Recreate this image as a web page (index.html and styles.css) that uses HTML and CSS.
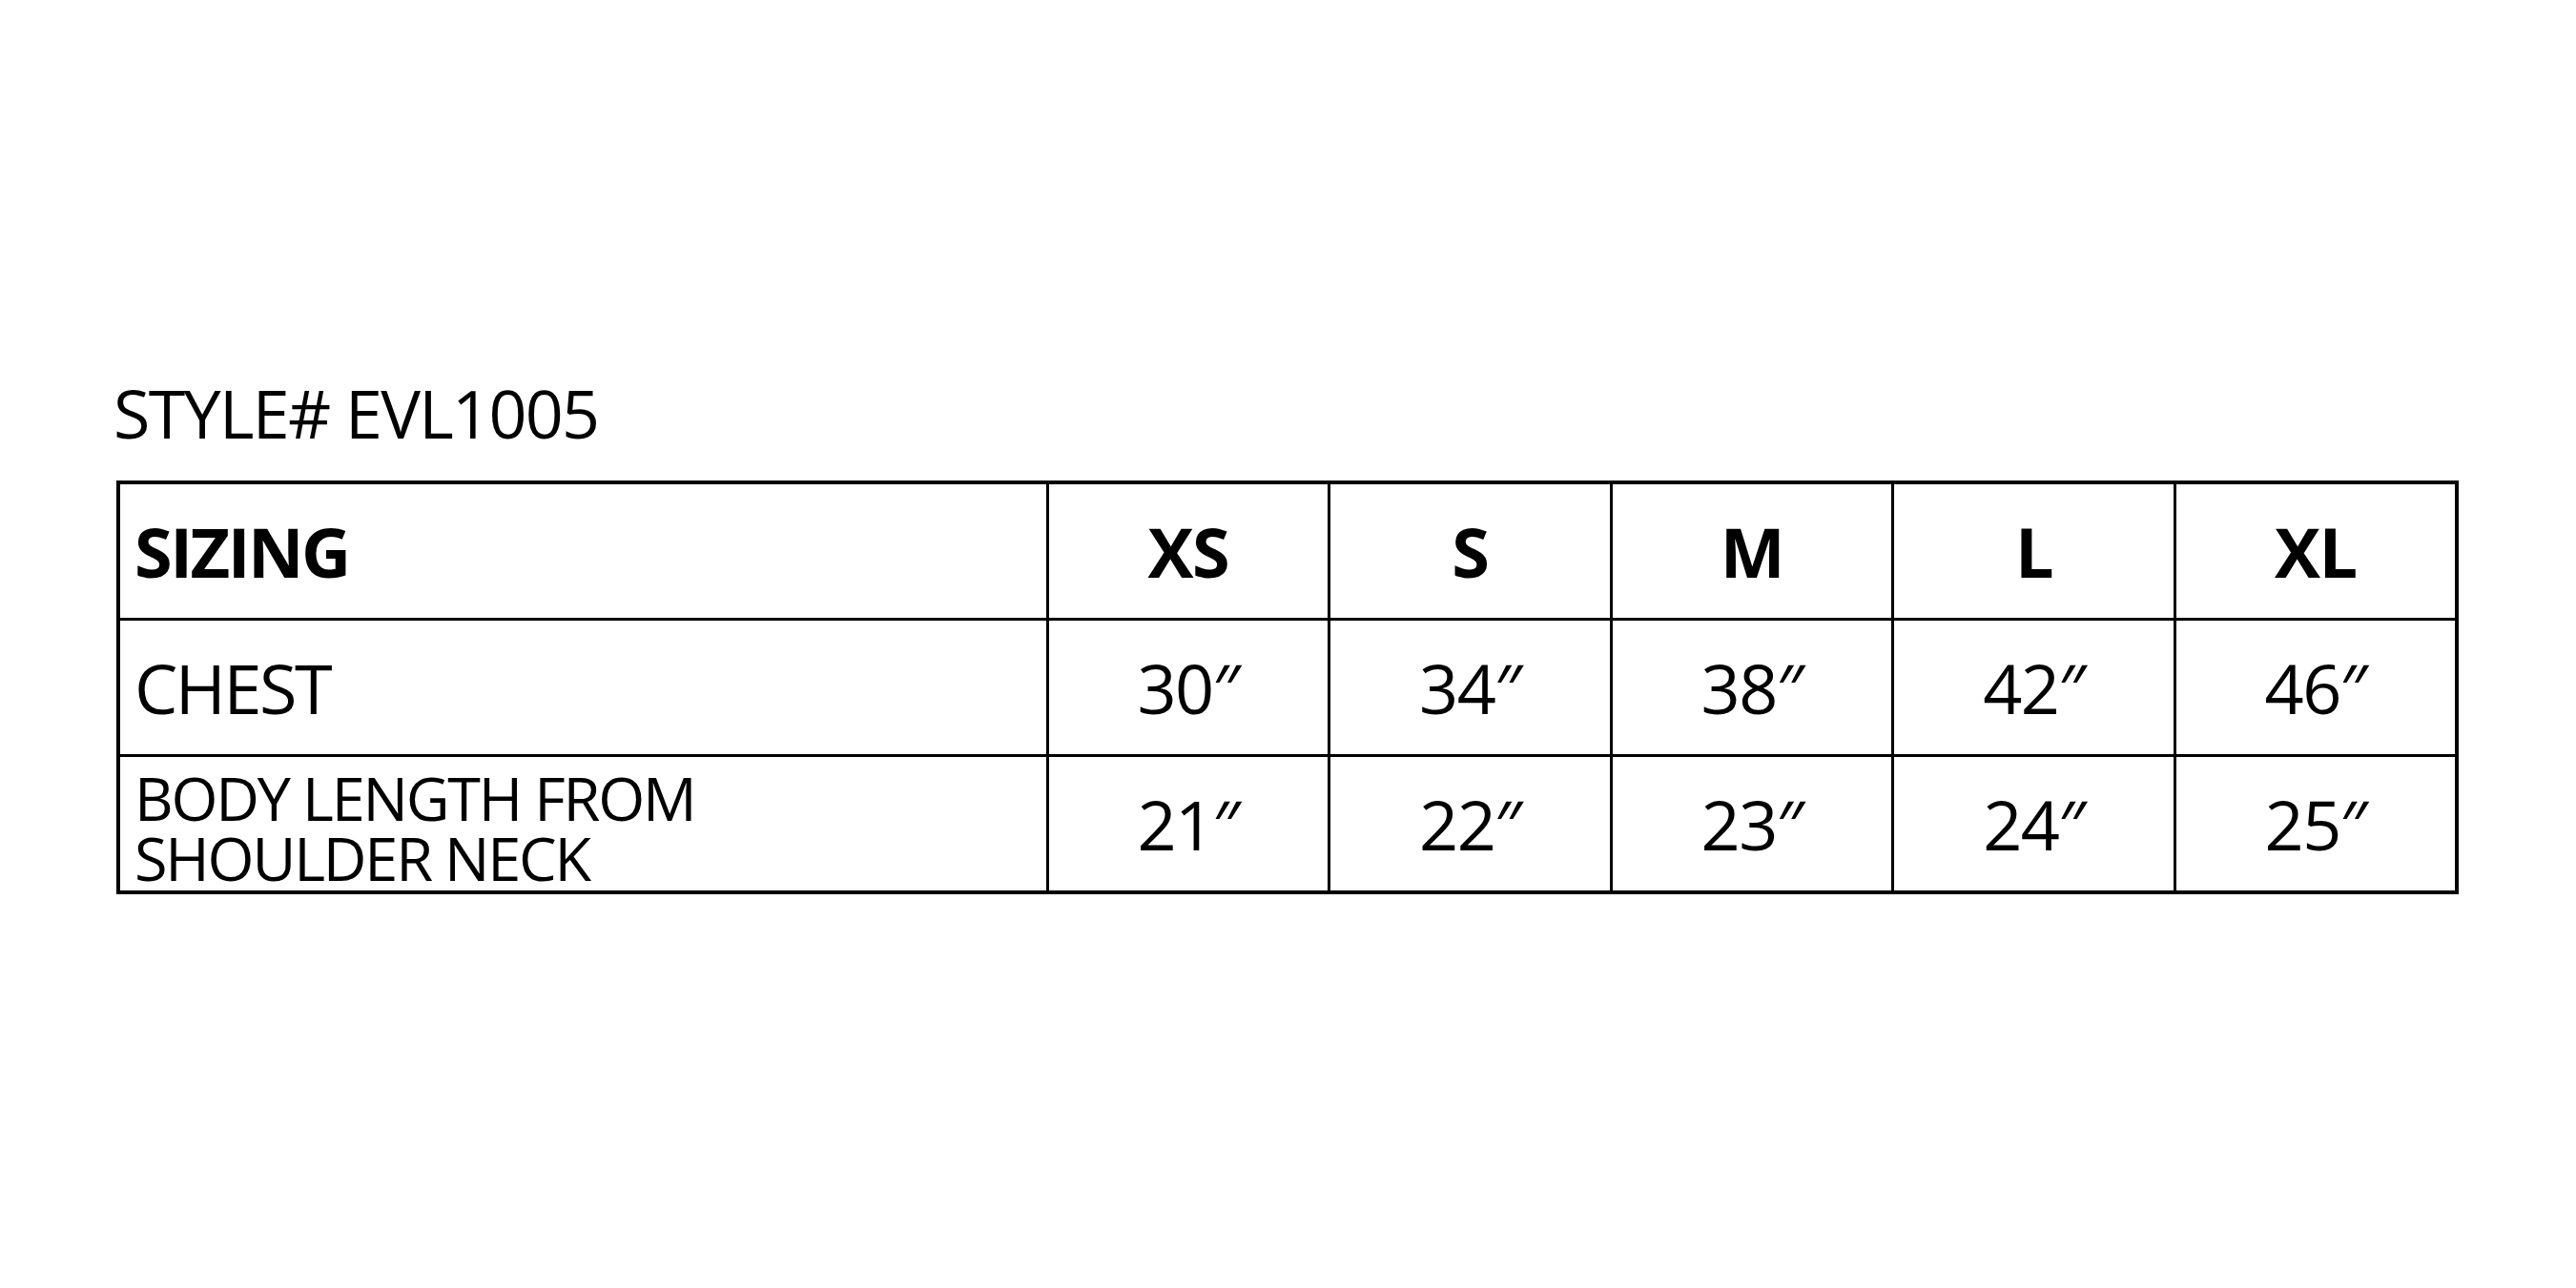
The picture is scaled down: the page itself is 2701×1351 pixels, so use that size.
FILE: index.html
```html
<!DOCTYPE html>
<html lang="en">
<head>
<meta charset="utf-8">
<title>Size chart EVL1005</title>
<link rel="stylesheet" href="styles.css">
</head>
<body>
<main class="sheet">
  <h1 class="style-title">STYLE# EVL1005</h1>
  <table class="size-table">
    <colgroup>
      <col class="col-label">
      <col class="col-size"><col class="col-size"><col class="col-size"><col class="col-size"><col class="col-size">
    </colgroup>
    <tr class="row-head">
      <th class="label">SIZING</th>
      <th>XS</th><th>S</th><th>M</th><th>L</th><th>XL</th>
    </tr>
    <tr>
      <td class="label">CHEST</td>
      <td>30″</td><td>34″</td><td>38″</td><td>42″</td><td>46″</td>
    </tr>
    <tr>
      <td class="label small"><span class="line">BODY LENGTH FROM</span><span class="line">SHOULDER NECK</span></td>
      <td>21″</td><td>22″</td><td>23″</td><td>24″</td><td>25″</td>
    </tr>
  </table>
</main>
</body>
</html>
```
FILE: styles.css
```css
html, body {
  margin: 0;
  padding: 0;
  background: #ffffff;
}
body {
  font-family: "Open Sans", "Noto Sans", "DejaVu Sans", sans-serif;
  color: #000;
}
.sheet {
  padding: 383px 0 0 122px;
}
.style-title {
  margin: 0 0 0 -3px;
  font-weight: 400;
  font-size: 70px;
  line-height: 100px;
  letter-spacing: -1.7px;
  height: 121px;
}
.size-table {
  border-collapse: collapse;
  table-layout: fixed;
  width: 2452px;
  border: 4px solid #000;
}
.col-label { width: 974px; }
.col-size { width: 295.6px; }
.size-table th,
.size-table td {
  border: 3px solid #000;
  height: 140px;
  padding: 0;
  text-align: center;
  vertical-align: middle;
  font-size: 72px;
  line-height: 1;
  letter-spacing: -1.5px;
}
.size-table th {
  font-weight: 700;
}
.size-table .label {
  text-align: left;
  padding-left: 15px;
  letter-spacing: -2.5px;
}
.size-table .small {
  height: 132px;
  padding-top: 8px;
  font-size: 63px;
  line-height: 63px;
  letter-spacing: -2.2px;
}
.line {
  display: block;
}
```
